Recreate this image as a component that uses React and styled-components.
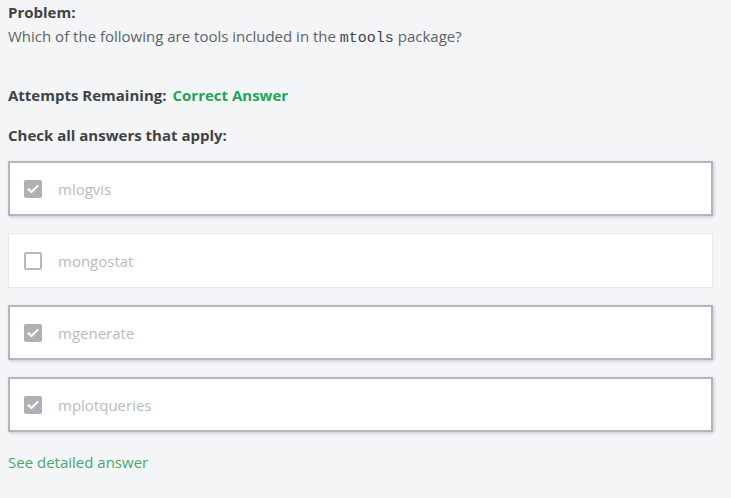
import React from 'react';
import styled, { createGlobalStyle } from 'styled-components';

const GlobalStyle = createGlobalStyle`
	html, body {
		margin: 0;
		padding: 0;
		background: #f4f5f7;
	}
	body {
		font-family: 'Open Sans', Lato, Arial, sans-serif;
	}
`;

const Page = styled.div`
	padding: 2px 18px 0 8px;
	width: 705px;
	min-height: 498px;
`;

const Heading = styled.div`
	font-size: 15px;
	font-weight: 700;
	color: #3e4347;
	line-height: 20px;
`;

const Question = styled.p`
	margin: 4px 0 0;
	font-size: 15px;
	color: #5d6368;
	line-height: 20px;
`;

const Code = styled.code`
	font-family: 'Liberation Mono', 'DejaVu Sans Mono', monospace;
	font-size: 15px;
	color: #3e4347;
`;

const Status = styled.div`
	margin-top: 36px;
	display: flex;
	gap: 6px;
	font-size: 15px;
	font-weight: 700;
	color: #3e4347;
	line-height: 20px;
`;

const Correct = styled.span`
	color: #25a35a;
`;

const Instruction = styled(Heading)`
	margin-top: 20px;
`;

const Options = styled.div`
	margin-top: 16px;
	display: flex;
	flex-direction: column;
	gap: 17px;
`;

const Option = styled.label`
	display: flex;
	align-items: center;
	gap: 16px;
	height: 55px;
	box-sizing: border-box;
	padding-left: ${(p) => (p.$selected ? '14px' : '15px')};
	background: #fff;
	border: ${(p) => (p.$selected ? '2px solid #b2b6ba' : '1px solid #e6e8ea')};
	box-shadow: ${(p) =>
		p.$selected ? '1px 1px 3px rgba(60, 70, 80, 0.25)' : 'none'};
`;

const Box = styled.span`
	width: 18px;
	height: 18px;
	box-sizing: border-box;
	border-radius: 2px;
	display: flex;
	align-items: center;
	justify-content: center;
	background: ${(p) => (p.$checked ? '#aeb2b7' : '#fff')};
	border: ${(p) => (p.$checked ? 'none' : '2px solid #b6babe')};
`;

const OptionText = styled.span`
	font-size: 15px;
	color: #b7bbbf;
`;

const Link = styled.a`
	display: inline-block;
	margin-top: 20px;
	font-size: 15px;
	color: #4ca56c;
	text-decoration: none;
`;

const Check = () => (
	<svg width="12" height="10" viewBox="0 0 12 10">
		<path
			d="M1.5 5.2 L4.5 8 L10.5 2"
			fill="none"
			stroke="#fff"
			strokeWidth="2"
			strokeLinecap="round"
			strokeLinejoin="round"
		/>
	</svg>
);

const options = [
	{ name: 'mlogvis', checked: true },
	{ name: 'mongostat', checked: false },
	{ name: 'mgenerate', checked: true },
	{ name: 'mplotqueries', checked: true },
];

export default function App() {
	return (
		<Page>
			<GlobalStyle />
			<Heading>Problem:</Heading>
			<Question>
				Which of the following are tools included in the <Code>mtools</Code> package?
			</Question>
			<Status>
				Attempts Remaining: <Correct>Correct Answer</Correct>
			</Status>
			<Instruction>Check all answers that apply:</Instruction>
			<Options>
				{options.map((o) => (
					<Option key={o.name} $selected={o.checked}>
						<Box $checked={o.checked}>{o.checked && <Check />}</Box>
						<OptionText>{o.name}</OptionText>
					</Option>
				))}
			</Options>
			<Link href="#">See detailed answer</Link>
		</Page>
	);
}
